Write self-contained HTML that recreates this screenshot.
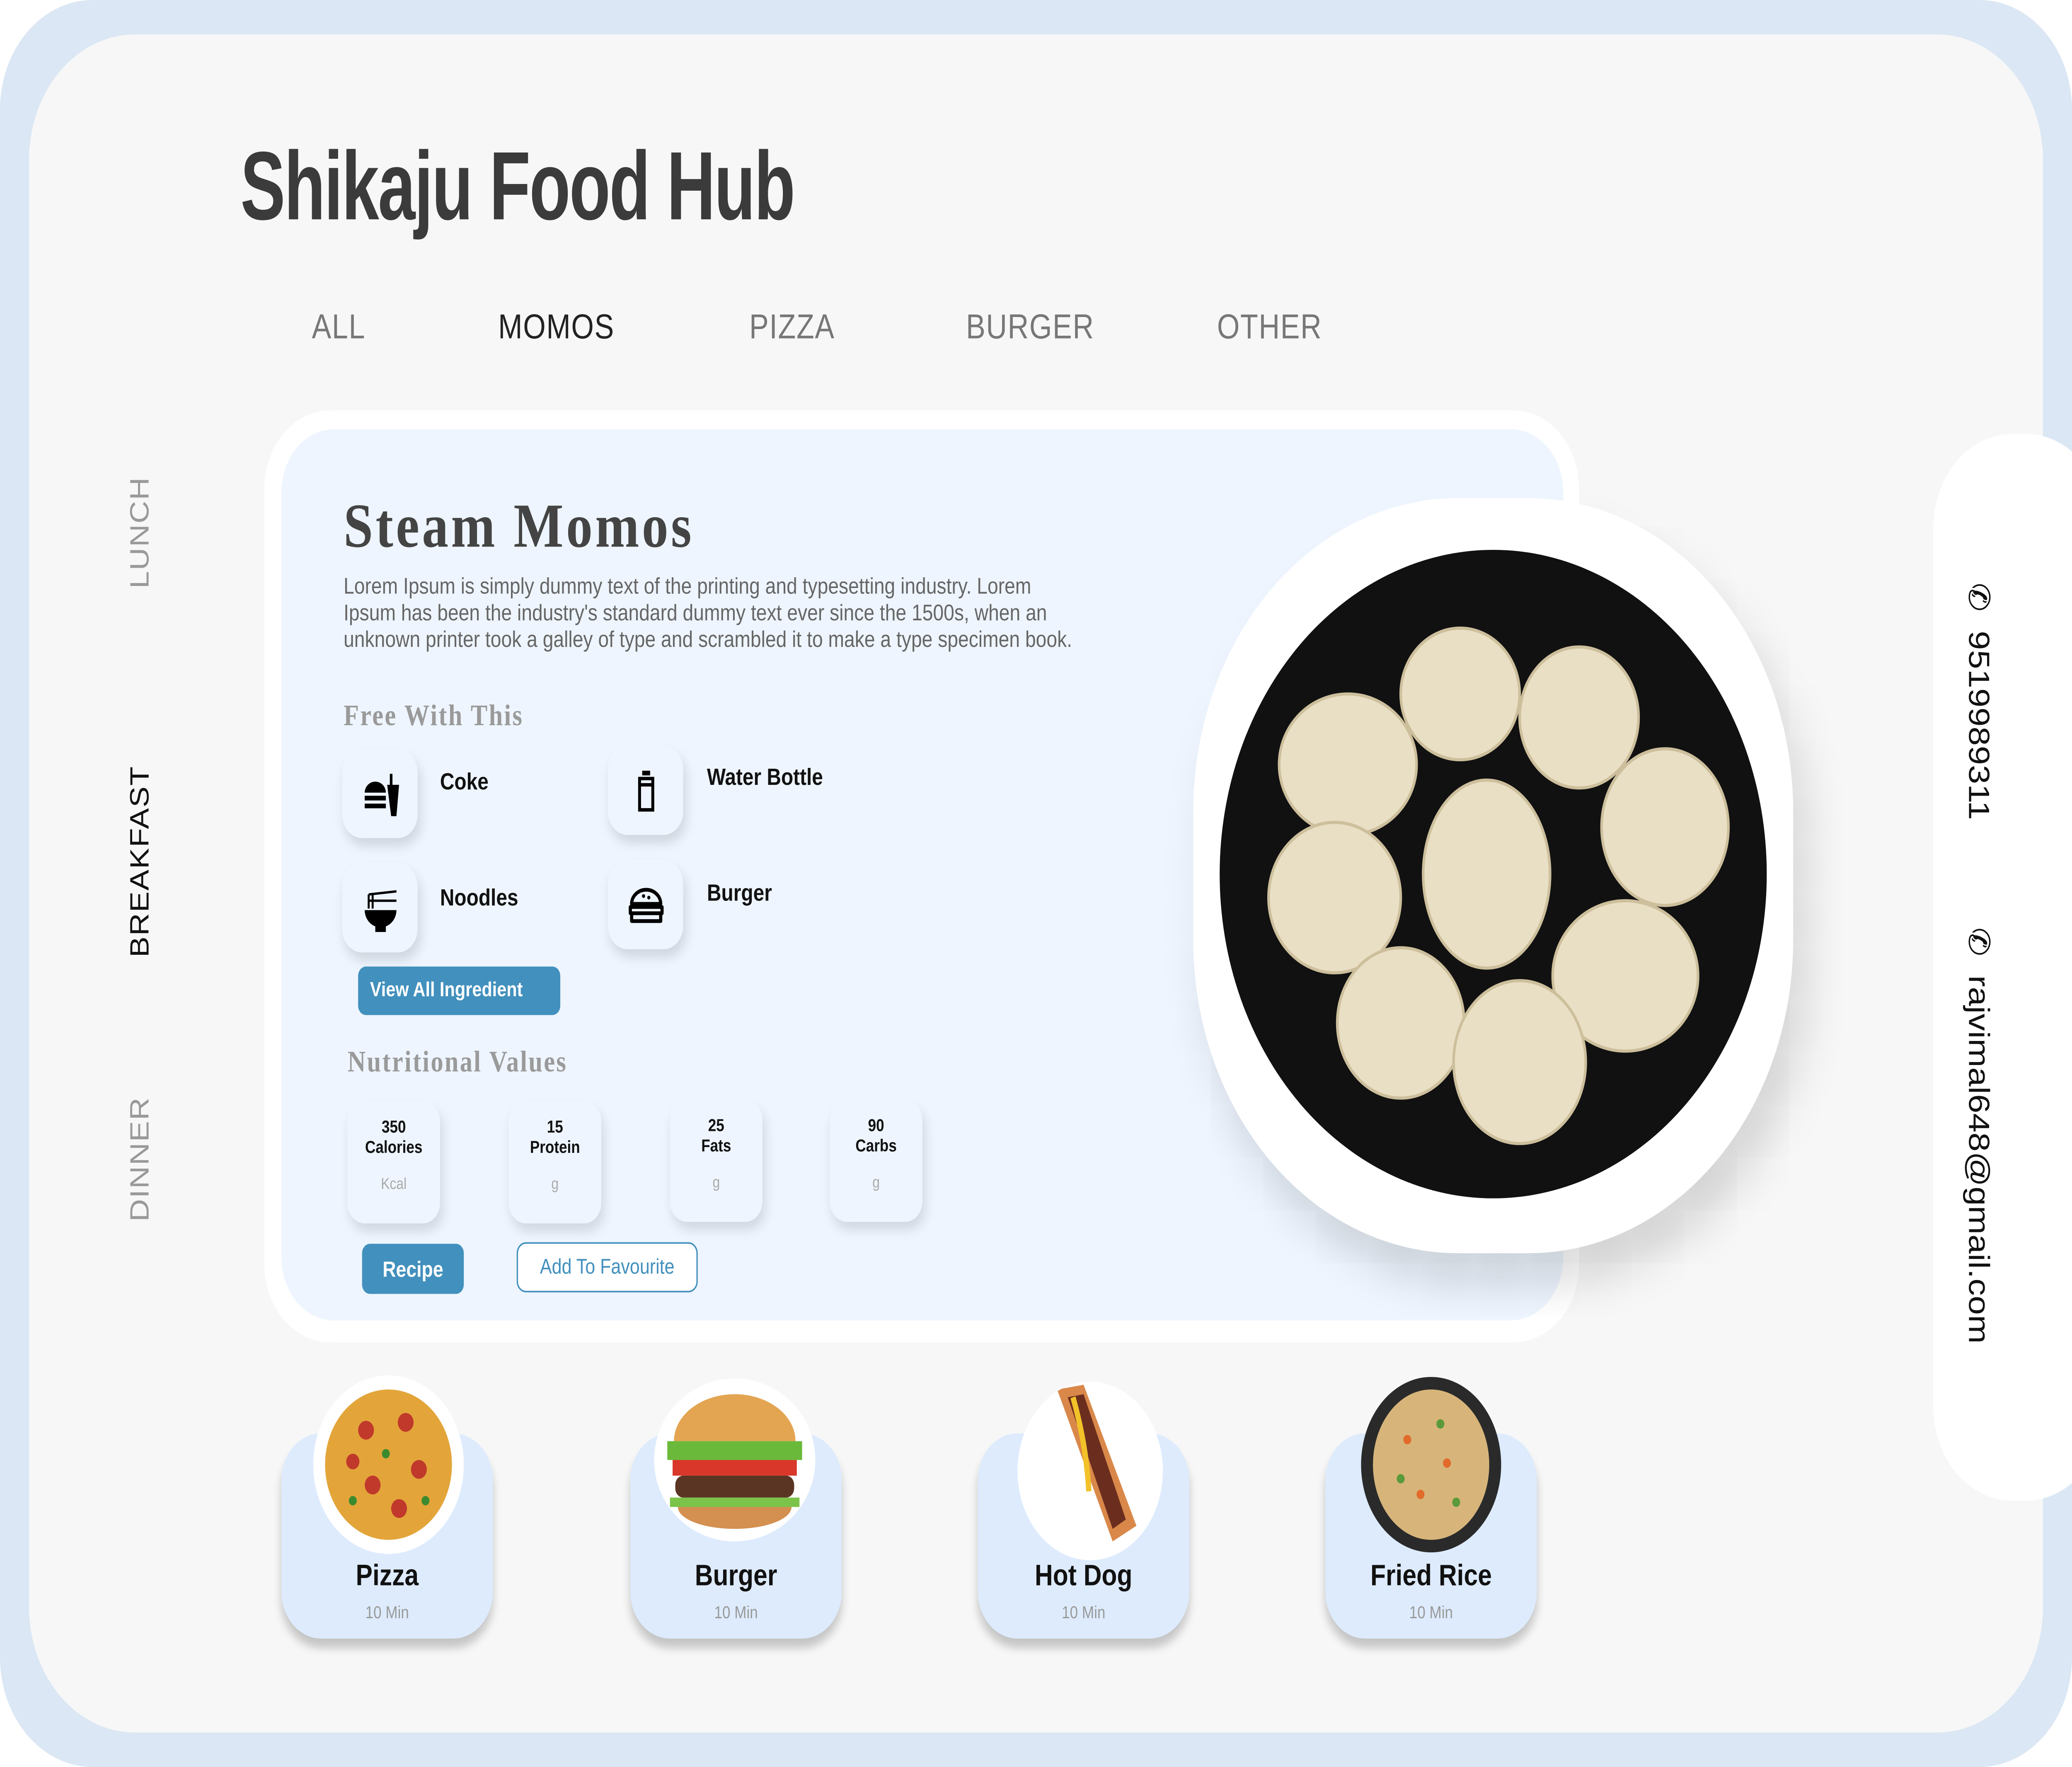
<!DOCTYPE html>
<html><head><meta charset="utf-8"><style>
*{margin:0;padding:0;box-sizing:border-box}
html,body{width:5928px;height:4264px;overflow:hidden;background:#fff}
#s{position:absolute;left:0;top:0;width:1568px;height:1128px;transform:scale(3.7806);transform-origin:0 0;font-family:"Liberation Sans",sans-serif}
.a{position:absolute}
.frame{left:0;top:0;width:1568px;height:1128px;background:#dbe7f4;border-radius:70px}
.inner{left:22px;top:22px;width:1524px;height:1084px;background:#f7f7f7;border-radius:80px}
.nav{top:196px;font-size:22px;color:#777;letter-spacing:.5px}
.vert{font-size:20px;color:#999;transform:translate(-50%,-50%) rotate(-90deg);white-space:nowrap;letter-spacing:.5px}
.ib{width:57px;height:57px;background:#eef5fe;border-radius:15px;box-shadow:2px 5px 8px rgba(0,0,0,.13);display:flex;align-items:center;justify-content:center}
.il{font-size:15px;font-weight:bold;color:#111}
.nc{width:70px;height:78px;background:#eef5fe;border-radius:13px;box-shadow:2px 5px 8px rgba(0,0,0,.12);text-align:center;font-size:11px;font-weight:bold;color:#111;padding-top:11px;line-height:13px}
.nc span{display:block;font-weight:normal;color:#aaa;font-size:10px;margin-top:10px}
.serif{font-family:"Liberation Serif","DejaVu Serif",serif;font-weight:bold}
.card{width:160px;height:131px;top:915px;background:#ddebfd;border-radius:30px;box-shadow:0 6px 6px rgba(0,0,0,.2);text-align:center}
.card b{display:block;margin-top:81px;font-size:19px;color:#111}
.card i{display:block;font-style:normal;font-size:11px;color:#999;margin-top:6px}
.circ{width:114px;height:114px;border-radius:50%;background:#fff;top:878px;overflow:hidden}
</style></head><body><div id="s">
<div class="a frame"></div><div class="a inner"></div>
<div class="a" style="left:182px;top:84px;font-size:62px;font-weight:bold;color:#3b3b3b;transform:scaleX(.82);transform-origin:0 0;white-space:nowrap;letter-spacing:-1px">Shikaju Food Hub</div>
<div class="a nav" style="left:236px">ALL</div>
<div class="a nav" style="left:377px;color:#222">MOMOS</div>
<div class="a nav" style="left:567px">PIZZA</div>
<div class="a nav" style="left:731px">BURGER</div>
<div class="a nav" style="left:921px">OTHER</div>
<div class="a vert" style="left:107px;top:340px">LUNCH</div>
<div class="a vert" style="left:107px;top:550px;color:#111">BREAKFAST</div>
<div class="a vert" style="left:107px;top:740px">DINNER</div>

<div class="a" style="left:200px;top:262px;width:995px;height:595px;background:#fff;border-radius:50px"></div>
<div class="a" style="left:213px;top:274px;width:970px;height:569px;background:#eef5fe;border-radius:40px"></div>
<div class="a serif" style="left:260px;top:312px;font-size:40px;color:#444;letter-spacing:2px">Steam Momos</div>
<div class="a" style="left:260px;top:367px;width:560px;font-size:14.5px;line-height:17px;color:#666">Lorem Ipsum is simply dummy text of the printing and typesetting industry. Lorem Ipsum has been the industry's standard dummy text ever since the 1500s, when an unknown printer took a galley of type and scrambled it to make a type specimen book.</div>
<div class="a serif" style="left:260px;top:447px;font-size:19px;color:#9a9a9a;letter-spacing:1px">Free With This</div>

<div class="a ib" style="left:259px;top:478px"><svg width="28" height="30" viewBox="0 0 28 30"><path d="M2 14a8 7 0 0 1 16 0zM2 16h16v3H2zM2 21h16v3H2z" fill="#000"/><path d="M19 9h9l-2 20h-4z" fill="#000"/><rect x="21" y="2" width="2" height="8" fill="#000"/></svg></div>
<div class="a il" style="left:333px;top:491px">Coke</div>
<div class="a ib" style="left:460px;top:476px"><svg width="16" height="30" viewBox="0 0 16 30"><rect x="5" y="2" width="6" height="3" fill="#000"/><path d="M3 7h10v4H3zM3 11h10v16H3z" fill="none" stroke="#000" stroke-width="2.2"/></svg></div>
<div class="a il" style="left:535px;top:488px">Water Bottle</div>
<div class="a ib" style="left:259px;top:551px"><svg width="28" height="30" viewBox="0 0 28 30"><path d="M2 16h24a12 11 0 0 1-24 0zM10 26h8v4h-8z" fill="#000"/><path d="M5 15V6M8 15V6M5 6l21-2M5 10h21" stroke="#000" stroke-width="1.5" fill="none"/></svg></div>
<div class="a il" style="left:333px;top:565px">Noodles</div>
<div class="a ib" style="left:460px;top:549px"><svg width="30" height="28" viewBox="0 0 30 28"><path d="M4 13a11 9 0 0 1 22 0zM3 15h24v4H3zM4 19h22v5H4z" fill="none" stroke="#000" stroke-width="2.4" stroke-linejoin="round"/><circle cx="13" cy="8" r="1.2"/><circle cx="17" cy="9" r="1.2"/></svg></div>
<div class="a il" style="left:535px;top:562px">Burger</div>
<div class="a" style="left:271px;top:617px;width:153px;height:31px;background:#4290bd;border-radius:6px;color:#fff;font-size:13px;font-weight:bold;padding:7px 9px">View All Ingredient</div>
<div class="a serif" style="left:263px;top:668px;font-size:19px;color:#9a9a9a;letter-spacing:1px">Nutritional Values</div>
<div class="a nc" style="left:263px;top:703px">350<br>Calories<span>Kcal</span></div>
<div class="a nc" style="left:385px;top:703px">15<br>Protein<span>g</span></div>
<div class="a nc" style="left:507px;top:702px">25<br>Fats<span>g</span></div>
<div class="a nc" style="left:628px;top:702px">90<br>Carbs<span>g</span></div>
<div class="a" style="left:274px;top:794px;width:77px;height:32px;background:#4290bd;border-radius:6px;color:#fff;font-size:14px;font-weight:bold;text-align:center;line-height:32px">Recipe</div>
<div class="a" style="left:391px;top:793px;width:137px;height:32px;background:#fff;border:1.5px solid #4290bd;border-radius:7px;color:#4290bd;font-size:13.5px;text-align:center;line-height:29px">Add To Favourite</div>

<div class="a" style="left:903px;top:318px;width:454px;height:482px;background:#fff;border-radius:200px;box-shadow:10px 20px 30px rgba(0,0,0,.15)"></div>
<svg class="a" style="left:920px;top:348px" width="420" height="420" viewBox="0 0 420 420">
<circle cx="210" cy="210" r="207" fill="#111"/>
<g fill="#e9dfc4" stroke="#cdbf9c" stroke-width="2">
<ellipse cx="185" cy="95" rx="45" ry="42"/><ellipse cx="275" cy="110" rx="45" ry="45"/>
<ellipse cx="100" cy="140" rx="52" ry="45"/><ellipse cx="340" cy="180" rx="48" ry="50"/>
<ellipse cx="205" cy="210" rx="48" ry="60"/><ellipse cx="90" cy="225" rx="50" ry="48"/>
<ellipse cx="310" cy="275" rx="55" ry="48"/><ellipse cx="140" cy="305" rx="48" ry="48"/>
<ellipse cx="230" cy="330" rx="50" ry="52"/></g></svg>

<div class="a" style="left:1463px;top:277px;width:130px;height:681px;background:#fff;border-radius:60px"></div>
<div class="a" style="left:1510px;top:372px;font-size:22px;color:#111;transform:rotate(90deg);transform-origin:0 0;white-space:nowrap">✆&nbsp; 9519989311</div>
<div class="a" style="left:1510px;top:592px;font-size:22px;color:#111;transform:rotate(90deg);transform-origin:0 0;white-space:nowrap">✆&nbsp; rajvimal648@gmail.com</div>

<div class="a card" style="left:213px"><b>Pizza</b><i>10 Min</i></div>
<div class="a card" style="left:477px"><b>Burger</b><i>10 Min</i></div>
<div class="a card" style="left:740px"><b>Hot Dog</b><i>10 Min</i></div>
<div class="a card" style="left:1003px"><b>Fried Rice</b><i>10 Min</i></div>
<div class="a circ" style="left:237px"><svg width="114" height="114"><circle cx="57" cy="57" r="48" fill="#e3a53a"/><g fill="#c0392b"><circle cx="40" cy="35" r="6"/><circle cx="70" cy="30" r="6"/><circle cx="80" cy="60" r="6"/><circle cx="45" cy="70" r="6"/><circle cx="65" cy="85" r="6"/><circle cx="30" cy="55" r="5"/></g><g fill="#3c8a2e"><circle cx="55" cy="50" r="3"/><circle cx="85" cy="80" r="3"/><circle cx="30" cy="80" r="3"/></g></svg></div>
<div class="a circ" style="left:495px;width:122px;height:104px;top:880px;border-radius:50%"><svg width="122" height="104"><path d="M15 40a46 30 0 0 1 92 0z" fill="#e3a552"/><rect x="10" y="40" width="102" height="12" fill="#6ab93a"/><rect x="14" y="52" width="94" height="10" fill="#d8372a"/><rect x="16" y="62" width="90" height="14" rx="6" fill="#5b3524"/><rect x="12" y="76" width="98" height="6" fill="#7cc34a"/><path d="M18 82h86a43 14 0 0 1-86 0z" fill="#d49050"/></svg></div>
<div class="a circ" style="left:770px;width:110px;top:882px"><svg width="110" height="114"><path d="M30 5l20 -3 40 90-18 10z" fill="#d9884a"/><path d="M38 10l12-2 32 80-10 6z" fill="#6b2e1e"/><path d="M42 10q10 30 12 60" stroke="#f2c228" stroke-width="4" fill="none"/></svg></div>
<div class="a circ" style="left:1030px;width:106px;height:112px;top:879px;background:#2a2a2a"><svg width="106" height="112"><ellipse cx="53" cy="56" rx="44" ry="48" fill="#d7b57a"/><g fill="#e26b2b"><circle cx="35" cy="40" r="3"/><circle cx="65" cy="55" r="3"/><circle cx="45" cy="75" r="3"/></g><g fill="#5a9a3a"><circle cx="60" cy="30" r="3"/><circle cx="30" cy="65" r="3"/><circle cx="72" cy="80" r="3"/></g></svg></div>
</div>
<script>
(function(){var w=window.innerWidth||5928,h=window.innerHeight||4264;document.getElementById('s').style.transform='scale('+(w/1568)+','+(h/1128)+')';var d=document.documentElement,b=document.body;d.style.width=b.style.width=w+'px';d.style.height=b.style.height=h+'px';})();
</script>
</body></html>
